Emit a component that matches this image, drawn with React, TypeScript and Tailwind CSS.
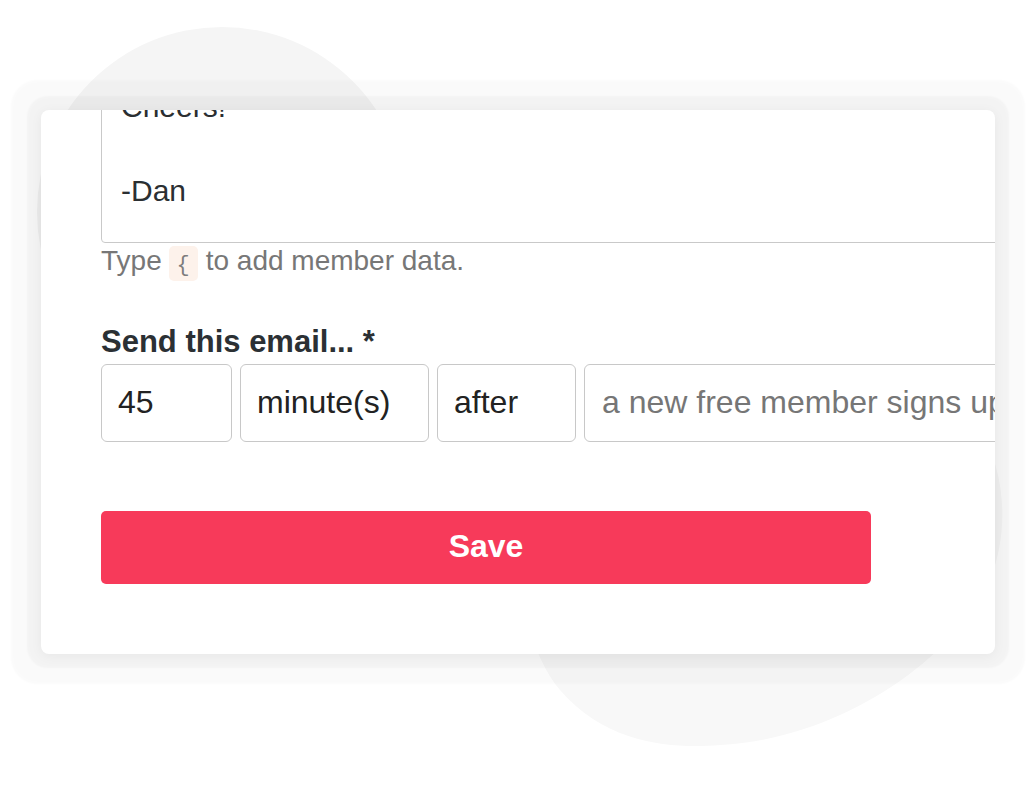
import React from "react";

const font = { fontFamily: '"Liberation Sans", Arial, sans-serif' };

export default function App() {
  return (
    <div
      className="relative w-[1036px] h-[794px] overflow-hidden bg-white"
      style={font}
    >
      <svg
        className="absolute inset-0"
        width="1036"
        height="794"
        viewBox="0 0 1036 794"
      >
        <circle cx="222" cy="212" r="185" fill="#f5f5f5" />
        <path
          d="M 560 380 C 505 430, 500 620, 560 690 C 610 748, 680 748, 720 745 C 850 738, 960 650, 990 580 C 1010 530, 1005 470, 980 430 C 900 330, 620 330, 560 380 Z"
          fill="#f8f8f8"
        />
      </svg>

      <div className="relative ml-[41px] mt-[110px] w-[954px] h-[544px] rounded-[8px] bg-white overflow-hidden shadow-[0_0_2px_14px_rgba(0,0,0,0.026),0_0_2px_30px_rgba(0,0,0,0.018),0_2px_12px_rgba(0,0,0,0.05)]">
        <div className="flex flex-col w-[1400px] pl-[60px]">
          {/* textarea */}
          <div className="mt-[-25px] w-[1100px] border border-[#c9c9c9] rounded-[4px] pl-[19px] pb-[30px] text-[30px] leading-[42px] text-[#2b2f32]">
            <div>Cheers!</div>
            <div>&nbsp;</div>
            <div>-Dan</div>
          </div>

          {/* helper */}
          <div className="flex items-start mt-[-2px] h-[40px] text-[28px] leading-[40px] text-[#777777]">
            <span>Type</span>
            <span className="ml-[7px] mt-[5px] flex h-[35px] w-[29px] items-end justify-center rounded-[5px] bg-[#fdf2eb] pb-[4px]">
              <span
                className="text-[22px] leading-[22px] text-[#7d7d7d]"
                style={{ fontFamily: '"Liberation Mono", "Courier New", monospace' }}
              >
                {"{"}
              </span>
            </span>
            <span className="ml-[8px]">to add member data.</span>
          </div>

          {/* label */}
          <div className="mt-[42px] text-[31px] leading-[38px] font-bold text-[#2b3034]">
            Send this email... *
          </div>

          {/* inputs */}
          <div className="mt-[3px] flex gap-[8px]">
            <div className="flex h-[78px] w-[131px] items-center rounded-[6px] border border-[#c8c8c8] pl-[16px] pb-[3px] text-[32px] text-[#222222]">
              45
            </div>
            <div className="flex h-[78px] w-[189px] items-center rounded-[6px] border border-[#c8c8c8] pl-[16px] pb-[3px] text-[32px] text-[#222222]">
              minute(s)
            </div>
            <div className="flex h-[78px] w-[139px] items-center rounded-[6px] border border-[#c8c8c8] pl-[16px] pb-[3px] text-[32px] text-[#222222]">
              after
            </div>
            <div className="flex h-[78px] w-[520px] items-center rounded-[6px] border border-[#c8c8c8] pl-[17px] pb-[3px] text-[32px] text-[#767676] whitespace-nowrap">
              a new free member signs up
            </div>
          </div>

          {/* button */}
          <div className="mt-[69px] flex h-[73px] w-[770px] items-center justify-center rounded-[5px] bg-[#f73a5a] pb-[3px] text-[32px] font-bold text-white">
            Save
          </div>
        </div>
      </div>
    </div>
  );
}
